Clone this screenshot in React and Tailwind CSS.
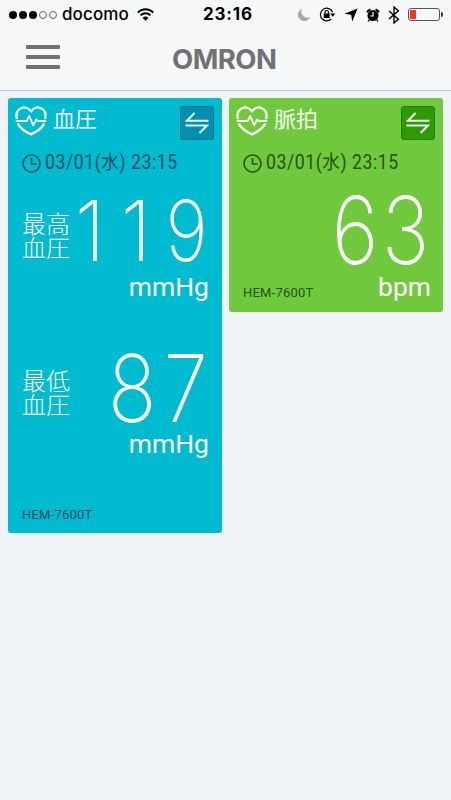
import React from 'react';

const StatusBar = () => {
    return (
        <div className="flex h-[29px] items-center pl-[9px] pr-[8px] text-black">
            <div className="flex w-[48px] gap-[2px]">
                <span className="h-2 w-2 rounded-full bg-black" />
                <span className="h-2 w-2 rounded-full bg-black" />
                <span className="h-2 w-2 rounded-full bg-black" />
                <span className="h-2 w-2 rounded-full border border-[#666]" />
                <span className="h-2 w-2 rounded-full border border-[#666]" />
            </div>
            <span className="ml-[5px] w-[67px] whitespace-nowrap text-[17px] font-medium tracking-[0.1px]">docomo</span>
            <svg className="ml-[8px]" width="17" height="13" viewBox="0 0 17 13" fill="none" stroke="black" strokeWidth="2">
                <path d="M.8 4.6a10.8 10.8 0 0 1 15.4 0M3.6 7.4a6.9 6.9 0 0 1 9.8 0" />
                <path d="M5.6 10a4.1 4.1 0 0 1 5.8 0l-2.9 2.8z" fill="black" stroke="none" />
            </svg>
            <span className="ml-[49px] w-[50px] whitespace-nowrap text-[17px] font-bold tracking-[0.8px]">23:16</span>
            <div className="ml-auto flex items-center">
                <svg width="14" height="14" viewBox="0 0 14 14" fill="#a9a9ab">
                    <path d="M5 .7A6.4 6.4 0 1 0 13.3 9 6.2 6.2 0 0 1 5 .7z" />
                </svg>
                <svg className="ml-[8px]" width="17" height="15" viewBox="0 0 17 15" fill="none" stroke="black" strokeWidth="1.2">
                    <path d="M13.6 5.2A6.3 6.3 0 1 0 12.2 12M13.9 7.2v1.3" />
                    <path d="M11.2 6.5h5.2l-2.6 3.2z" fill="black" stroke="none" />
                    <rect x="4.7" y="6.5" width="6" height="4.6" fill="black" stroke="none" />
                    <path d="M6 6.8V5.2a1.7 1.7 0 0 1 3.4 0v1.6" />
                </svg>
                <svg className="ml-[8px]" width="14" height="14" viewBox="0 0 14 14" fill="black">
                    <path d="M13.6.4 8.2 13.6 7.2 6.8.4 5.8z" />
                </svg>
                <svg className="ml-[8px]" width="14" height="14" viewBox="0 0 14 14">
                    <circle cx="7" cy="7.6" r="5.5" fill="black" />
                    <path d="m1.6 3.6 2-1.8M12.4 3.6l-2-1.8" stroke="black" strokeWidth="2.2" strokeLinecap="round" />
                    <path d="m3.2 11.8-1.1 1.5M10.8 11.8l1.1 1.5" stroke="black" strokeWidth="1.4" />
                    <path d="M7 4v4H4.3" fill="none" stroke="white" strokeWidth="1.2" />
                </svg>
                <svg className="ml-[8px]" width="12" height="18" viewBox="0 0 12 18" fill="none" stroke="black" strokeWidth="1.4">
                    <path d="m1 5 9.4 8.2L6 17V1l4.4 3.8L1 13" />
                </svg>
                <div className="ml-[8px] flex h-[13px] w-[32px] rounded-[3px] border border-[#555] p-px">
                    <div className="h-full w-[6px] rounded-l-[1px] bg-[#ff3126]" />
                </div>
                <div className="ml-px h-[5px] w-[2px] rounded-r-full bg-[#333]" />
            </div>
        </div>
    );
};

const HeartPulse = () => (
    <svg width="32" height="30" viewBox="0 0 32 30" fill="none" stroke="white" strokeWidth="2.3" strokeLinecap="round" strokeLinejoin="round">
        <path d="M1.8 12.2C-.3 2.6 10.5-2.4 16 5.3 21.5-2.4 32.3 2.6 30.2 12.2M3.2 18.3C6 23 11.5 26.3 16 28.4c4.5-2.1 10-5.4 12.8-10.1" />
        <path d="M1.5 15h10.2l2.6-5 3.9 9.4 3-5.9 1.6 1.5h7.7" strokeWidth="1.8" />
    </svg>
);

const SwapButton = ({ className }) => (
    <button className={`flex h-[34px] w-[34px] items-center justify-center rounded-[3px] border ${className}`}>
        <svg width="24" height="22" viewBox="0 0 24 22" fill="none" stroke="#e8f6f8" strokeWidth="2">
            <path d="M9.5 1 2 8.7h21.5M.5 13.5H22L14.5 21" />
        </svg>
    </button>
);

const CardHeader = ({ title, swapClass }) => (
    <div className="flex h-[50px] items-start pl-[7px] pr-[8px] pt-[8px]">
        <HeartPulse />
        <span className="ml-[6px] -mt-[3px] font-['Noto_Sans_CJK_JP',sans-serif] text-[22px] font-[350] leading-[28px] text-white">{title}</span>
        <div className="ml-auto">
            <SwapButton className={swapClass} />
        </div>
    </div>
);

const Timestamp = ({ className }) => (
    <div className={`flex h-[30px] items-center pl-[14px] ${className}`}>
        <svg width="19" height="19" viewBox="0 0 19 19" fill="none" stroke="currentColor" strokeWidth="1.6">
            <circle cx="9.5" cy="9.5" r="8.5" />
            <path d="M9.5 4v6h5" />
        </svg>
        <span className="ml-[4px] origin-left scale-x-[0.905] whitespace-nowrap font-['Roboto','Noto_Sans_CJK_JP',sans-serif] text-[19.5px] tracking-[0.6px]">03/01(水) 23:15</span>
    </div>
);

// tall, thin reading: each digit keeps its own cell
const Digits = ({ value, className }) => (
    <p className={`flex font-['Inter',sans-serif] font-extralight text-white ${className}`}>
        {value.split('').map((d, i) => (
            <span key={i} className={d === '1' ? 'flex w-[46px] justify-center pr-[9px]' : 'flex w-[46px] justify-center'}>
                <span className={d === '1' ? 'scale-x-[0.95]' : 'scale-x-[0.86]'}>{d}</span>
            </span>
        ))}
    </p>
);

const App = () => {
    return (
        <div className="h-[800px] w-[451px] overflow-hidden bg-[#eff3f7] font-['Inter','Noto_Sans_CJK_JP',sans-serif]">
            <header className="h-[91px] border-b border-[#bfc4ca] bg-[#f5f7f9]">
                <StatusBar />
                <div className="flex h-[60px] items-center pl-[26px]">
                    <button className="-mt-[5px] flex flex-col gap-[6px]">
                        <span className="h-1 w-[34px] rounded-[1px] bg-[#727272]" />
                        <span className="h-1 w-[34px] rounded-[1px] bg-[#727272]" />
                        <span className="h-1 w-[34px] rounded-[1px] bg-[#727272]" />
                    </button>
                    <h1 className="ml-[112px] whitespace-nowrap text-[27.5px] font-bold leading-[30px] tracking-[-0.5px] text-[#727272]">OMRON</h1>
                </div>
            </header>
            <main className="flex items-start gap-[7px] px-[8px] pt-[7px]">
                <section className="flex h-[435px] w-[214px] flex-col rounded-[3px] bg-[#00bbd0]">
                    <CardHeader title="血圧" swapClass="border-[#08758f] bg-[#008fb0]" />
                    <Timestamp className="text-[#0b4f5c]" />
                    <div className="flex h-[91px] justify-between pl-[14px] pr-[13px]">
                        <p className="w-[50px] pt-[33px] font-['Noto_Sans_CJK_JP',sans-serif] text-[24px] font-light leading-[24px] text-white">最高血圧</p>
                        <Digits value="119" className="pt-[20px] text-[84px] leading-[66px]" />
                    </div>
                    <p className="pr-[13px] pt-px text-right font-['Roboto',sans-serif] text-[26.5px] leading-[33px] text-white">mmHg</p>
                    <div className="mt-[32px] flex h-[92px] justify-between pl-[14px] pr-[13px]">
                        <p className="w-[50px] pt-[33px] font-['Noto_Sans_CJK_JP',sans-serif] text-[24px] font-light leading-[24px] text-white">最低血圧</p>
                        <Digits value="87" className="gap-[8px] pt-[18px] text-[93px] leading-[70px]" />
                    </div>
                    <p className="pr-[13px] text-right font-['Roboto',sans-serif] text-[26.5px] leading-[33px] text-white">mmHg</p>
                    <p className="mb-[10px] mt-auto pl-[14px] font-['Roboto',sans-serif] text-[13px] leading-[16px] tracking-[0.2px] text-[#0b4f5c]">HEM-7600T</p>
                </section>
                <section className="flex h-[214px] w-[214px] flex-col rounded-[3px] bg-[#70c93d]">
                    <CardHeader title="脈拍" swapClass="border-[#287a08] bg-[#309b00]" />
                    <Timestamp className="text-[#29510f]" />
                    <Digits value="63" className="h-[91px] justify-end gap-[5px] pr-[14px] pt-[17px] text-[93px] leading-[70px]" />
                    <div className="flex justify-between pl-[14px] pr-[12px]">
                        <span className="pt-[16px] font-['Roboto',sans-serif] text-[13px] leading-[16px] tracking-[0.2px] text-[#29510f]">HEM-7600T</span>
                        <span className="pt-px font-['Roboto',sans-serif] text-[26.5px] leading-[33px] text-white">bpm</span>
                    </div>
                </section>
            </main>
        </div>
    );
};

export default App;
